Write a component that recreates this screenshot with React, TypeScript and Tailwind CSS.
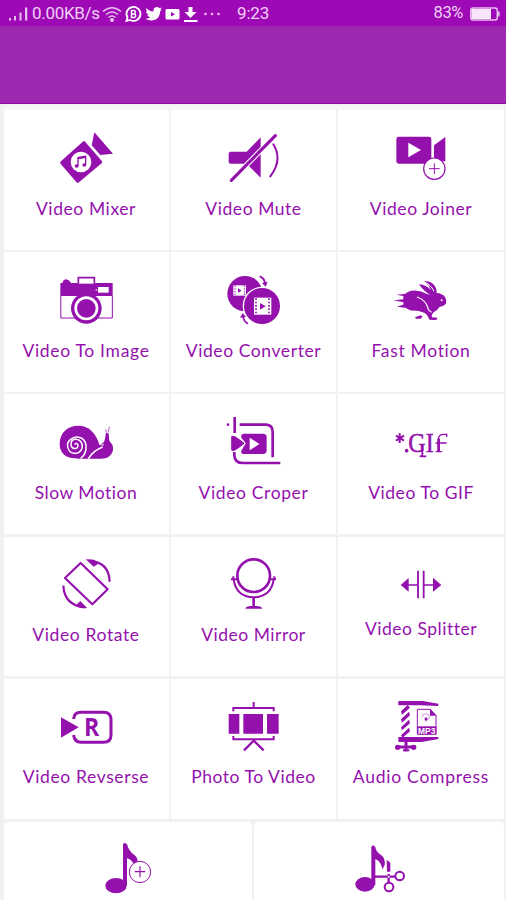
import type { ReactNode } from "react";

const P = "#9411ad";

function Icon({ box, children, w = 56, h = 56 }: { box: string; children: ReactNode; w?: number; h?: number }) {
  return (
    <svg width={w} height={h} viewBox={box} fill={P} className="shrink-0" aria-hidden="true">
      {children}
    </svg>
  );
}

const mixer = (
  <Icon box="174 30 168 168">
    <path d="M252 68 L302 126 L233 184 L185 128 Z" stroke={P} strokeWidth="9" strokeLinejoin="round" />
    <path d="M283 37 L339 101 L301 105 L275 76 Z" />
    <circle cx="243" cy="126" r="31" fill="#fff" />
    <path d="M234 138 V113 L257 109 V134" fill="none" stroke={P} strokeWidth="4" />
    <path d="M234 115 L257 111" stroke={P} strokeWidth="6" />
    <ellipse cx="230" cy="138" rx="6" ry="5" />
    <ellipse cx="253" cy="135" rx="6" ry="5" />
  </Icon>
);

const mute = (
  <Icon box="678 30 168 168">
    <path d="M692 95 H740 L782 52 V173 L740 131 H692 Q686 131 686 125 V101 Q686 95 692 95 Z" />
    <path d="M694 181 L826 47" stroke="#fff" strokeWidth="16" />
    <path d="M694 181 L826 47" stroke={P} strokeWidth="9.500" strokeLinecap="round" />
    <path d="M820 73 Q849 120 811 169" fill="none" stroke={P} strokeWidth="6" strokeLinecap="round" />
  </Icon>
);

const joiner = (
  <Icon box="420 30 168 168">
    <rect x="430" y="50" width="105" height="81" rx="7" />
    <path d="M466 68 L504 90 L466 112 Z" fill="#fff" />
    <path d="M543 76 L577 51 V124 H543 Z" />
    <circle cx="544" cy="146" r="32" fill="#fff" stroke={P} strokeWidth="3.6" />
    <path d="M528 146 H560 M544 130 V162" stroke={P} strokeWidth="3" />
  </Icon>
);

const camera = (
  <Icon box="174 66 168 168">
    <path d="M181 99 H187 Q190 88 199 88 Q209 90 213 99 H338 V138 H181 Z" />
    <path d="M235 101 V83 H283 V101" fill="#fff" stroke={P} strokeWidth="5" />
    <rect x="294" y="111" width="32" height="17" fill="#fff" />
    <circle cx="289" cy="120" r="2.5" fill="#fff" />
    <path d="M182.500 137 V204 H337 V137" fill="none" stroke={P} strokeWidth="3" />
    <circle cx="259" cy="175" r="46" />
    <circle cx="259" cy="175" r="36" fill="#fff" />
    <circle cx="259" cy="175" r="28" />
  </Icon>
);

const converter = (
  <Icon box="678 66 168 168">
    <circle cx="735" cy="131" r="53" />
    <rect x="700" y="106" width="38" height="31" fill="#fff" />
    <path d="M705 107 V136 M733 107 V136" stroke={P} strokeWidth="3" strokeDasharray="4 4" />
    <path d="M714 115 L725 122 L714 128 Z" />
    <circle cx="786" cy="168" r="58" fill="#fff" />
    <circle cx="786" cy="168" r="54" />
    <rect x="762" y="143" width="52" height="51" fill="#fff" />
    <path d="M768 145 V193 M807 145 V193" stroke={P} strokeWidth="5" strokeDasharray="5 5" />
    <path d="M780 159 L797 169 L780 179 Z" />
    <path d="M779 79 Q793 84 795 99" fill="none" stroke={P} strokeWidth="6" />
    <path d="M786 99 L803 95 L797 110 Z" />
    <path d="M744 221 Q731 214 729 199" fill="none" stroke={P} strokeWidth="5" />
    <path d="M720 203 L728 189 L738 201 Z" />
  </Icon>
);

const rabbit = (
  <Icon box="420 66 168 168">
    <path d="M451 139 Q462 120 491 122 Q505 123 516 130 L531 135 Q508 119 498 103 Q520 105 534 120 L526 105 Q518 98 512 94 Q535 91 547 110 Q552 120 551 129 Q568 130 576 141 Q582 150 579 161 Q572 169 560 170 Q554 180 543 186 Q534 194 537 202 L552 203 Q556 208 545 210 L529 209 Q522 190 509 187 Q496 181 478 182 Q456 178 451 162 Z" />
    <path d="M514 96 Q533 103 543 124" stroke="#fff" strokeWidth="3" fill="none" />
    <path d="M492 141 Q520 150 526 178 Q530 184 536 187" stroke="#fff" strokeWidth="3.500" fill="none" />
    <circle cx="566" cy="151" r="3" fill="#fff" />
    <path d="M486 202 L503 196 L509 199 L503 206 H489 Z" />
    <path d="M430 134 L462 131 V140 Z M422 151 L458 147 V158 Z M432 170 L462 160 V174 Z" />
  </Icon>
);

const snail = (
  <Icon box="174 66 168 168">
    <path d="M216 198 C193 195 179 179 179 156 C179 122 203 101 235 101 C268 101 289 125 298 158 Q311 155 314 144 L318 123 L326 124 C328 136 325 145 333 153 C344 165 340 186 325 195 Q318 200 302 200 H239 Z" />
    <path d="M319 121 L317 113 M325 120 L328 105" fill="none" stroke={P} strokeWidth="3" strokeLinecap="round" opacity="0.7" />
    <g fill="none" stroke="#fff" strokeWidth="4.500">
      <path d="M225 158 C225 152 235 154 234 162 C232 174 213 172 213 157 C213 139 234 137 243 150 C254 168 240 186 223 184 C203 182 195 154 212 142 C229 127 254 137 258 159 C260 179 252 192 242 199" />
      <path d="M265 200 Q279 176 308 165" />
      <path d="M298 156 Q304 162 312 158" strokeWidth="3" />
    </g>
  </Icon>
);

const cropper = (
  <Icon box="678 66 168 168">
    <g fill="none" stroke={P} strokeWidth="8">
      <path d="M704 75 V123" />
      <path d="M719 98 H798 Q818 99 818 120 V196" />
      <path d="M703 180 V190 Q704 213 729 213 H841" />
    </g>
    <circle cx="684" cy="98" r="4" />
    <path d="M732 125 H789 Q800 125 800 136 V175 Q800 186 789 186 H732 Q722 186 724 176 L737 154 L724 137 Q722 125 732 125 Z" />
    <path d="M697 135 Q700 131 729 154 Q700 177 697 173 Z" stroke="#fff" strokeWidth="13" strokeLinejoin="round" />
    <path d="M697 135 Q700 131 729 154 Q700 177 697 173 Z" stroke={P} strokeWidth="7" strokeLinejoin="round" />
    <path d="M749 137 L778 156 L749 175 Z" fill="#fff" />
  </Icon>
);

const gif = (
  <Icon box="420 66 168 168">
    <path d="M440 124 V153 M429 131 L453 146 M453 131 L429 146" stroke={P} strokeWidth="6" />
    <circle cx="461" cy="176" r="5.500" />
    <text x="466" y="180" fontFamily="'Liberation Serif', serif" fontSize="80" textLength="76" lengthAdjust="spacingAndGlyphs" stroke={P} strokeWidth="1.500">GI</text>
    <path d="M508 160 V189 Q508 193 500 193 M506 193 H520" fill="none" stroke={P} strokeWidth="5.500" />
    <path d="M556 179 V143 Q556 128 570 127 H581 V135 M548 153 H581 M548 179 H567" fill="none" stroke={P} strokeWidth="4" />
    <path d="M557 179 V140" stroke={P} strokeWidth="8" />
  </Icon>
);

const rotate = (
  <Icon box="174 66 168 168">
    <g fill="none" stroke={P} strokeWidth="6.500">
      <path d="M242 87 L323 166 L277 211 L195 132 Z" strokeLinejoin="round" />
      <path d="M267 80 Q327 84 329 143" />
      <path d="M190 155 Q193 214 254 220" />
    </g>
    <path d="M257 76 L283 77 L295 89 L281 98 Z M262 223 L241 201 L229 212 L240 221 Z" />
  </Icon>
);

const mirror = (
  <Icon box="678 66 168 168">
    <g fill="none" stroke={P}>
      <circle cx="761" cy="125" r="49" strokeWidth="8" />
      <path d="M701 136 Q708 188 761 190 Q814 188 821 136" strokeWidth="6" />
      <path d="M693 136 H715 M807 136 H828 M700 127 V139 M823 127 V139" strokeWidth="6" />
      <path d="M761 189 V218" strokeWidth="8" />
    </g>
    <path d="M736 224 Q738 217 752 216 H770 Q784 217 787 224 Z" />
  </Icon>
);

const splitter = (
  <Icon box="420 66 168 150" h={50}>
    <path d="M443 153 L467 132 V173 Z M565 153 L540 131 V173 Z" />
    <path d="M463 153 H495 M512 153 H544" stroke={P} strokeWidth="5" />
    <path d="M495 110 V193 M512 110 V193" stroke={P} strokeWidth="5.500" />
  </Icon>
);

const reverse = (
  <Icon box="174 66 168 168">
    <path d="M183 124 L236 154 L183 185 Z" />
    <path d="M221 129 Q222 109 243 109 H310 Q333 109 333 131 V177 Q333 199 310 199 H243 Q223 198 221 177" fill="none" stroke={P} strokeWidth="9" />
    <text x="252" y="180" fontFamily="'Open Sans', 'Noto Sans', sans-serif" fontSize="73" fontWeight="700" textLength="46" lengthAdjust="spacingAndGlyphs">R</text>
  </Icon>
);

const board = (
  <Icon box="678 66 168 168">
    <path d="M686 114 H718 V173 H686 Z M730 114 H789 V173 H730 Z M801 114 H836 V173 H801 Z" />
    <g fill="none" stroke={P} strokeWidth="6">
      <path d="M700 106 V96 H821 V106" />
      <path d="M700 180 V190 H821 V180" />
      <path d="M761 78 V96" />
      <path d="M763 192 L732 223 M759 192 L791 223" strokeWidth="7" />
    </g>
  </Icon>
);

const compress = (
  <Icon box="420 66 168 168">
    <path d="M436 75 H510 L556 83 V90 L500 88 H436 Z M436 183 H556 V189 L506 198 H436 Z" />
    <path d="M444 106 L464 87 L471 95 L447 116 Z M444 130 L468 107 L471 118 L447 140 Z M444 154 L468 131 L471 142 L447 163 Z M444 178 L468 155 L471 166 L449 185 Z" />
    <path d="M459 195 V226 M430 213 H488" stroke={P} strokeWidth="9" />
    <path d="M450 223 H469" stroke={P} strokeWidth="6" />
    <circle cx="434" cy="214" r="8" />
    <circle cx="482" cy="214" r="8" />
    <path d="M493 100 H532 L549 118 V174 H493 Z" fill="#fff" stroke={P} strokeWidth="3" />
    <path d="M531 99 V119 H550 Z" />
    <rect x="493" y="151" width="57" height="25" />
    <path d="M508 124 Q508 113 519 113 Q530 114 530 126 L518 133 M519 123 V137" fill="none" stroke={P} strokeWidth="2" opacity="0.7" />
    <circle cx="519" cy="129" r="4.500" />
    <text x="495" y="173" fontFamily="'Liberation Sans', sans-serif" fontSize="26" fontWeight="700" fill="#fff" textLength="52" lengthAdjust="spacingAndGlyphs">MP3</text>
  </Icon>
);

const addMusic = (
  <Icon box="300 492 168 168">
    <ellipse cx="348" cy="629" rx="32" ry="23" />
    <path d="M369 505 Q375 497 382 506 Q384 522 404 538 Q415 547 412 561 L400 562 Q393 550 381 547 V629 H369 Z" />
    <circle cx="420" cy="588" r="32" fill="#fff" stroke={P} strokeWidth="3" />
    <path d="M404 587 H436 M420 571 V604" stroke={P} strokeWidth="3.500" />
  </Icon>
);

const cutMusic = (
  <Icon box="291 492 168 168">
    <ellipse cx="333" cy="625" rx="29" ry="22" />
    <path d="M352 512 Q358 505 364 513 Q365 527 382 538 Q395 548 392 568 L385 580 Q381 556 364 549 V628 H352 Z" />
    <path d="M358 602 H423 M404 594 V619" fill="none" stroke={P} strokeWidth="7" />
    <path d="M398 551 L409 560 V587 H399 Z" />
    <circle cx="437" cy="600" r="13" fill="#fff" stroke={P} strokeWidth="6" />
    <circle cx="405" cy="633" r="13" fill="#fff" stroke={P} strokeWidth="6" />
    <circle cx="404" cy="602" r="3" fill="#fff" />
  </Icon>
);

const rows = [
  {
    cls: "h-[142px] pt-5 border-b-2",
    items: [
      { label: "Video Mixer", icon: mixer, track: "tracking-[0.58px]" },
      { label: "Video Mute", icon: mute, track: "tracking-[0.55px]" },
      { label: "Video Joiner", icon: joiner, track: "tracking-[0.58px]" },
    ],
  },
  {
    cls: "h-[142px] pt-5 border-b-2",
    items: [
      { label: "Video To Image", icon: camera, track: "tracking-[0.68px]" },
      { label: "Video Converter", icon: converter, track: "tracking-[0.58px]" },
      { label: "Fast Motion", icon: rabbit, track: "tracking-[0.68px]" },
    ],
  },
  {
    cls: "h-[143px] pt-5 border-b-3",
    items: [
      { label: "Slow Motion", icon: snail, track: "tracking-[0.5px]" },
      { label: "Video Croper", icon: cropper, track: "tracking-[0.62px]" },
      { label: "Video To GIF", icon: gif, track: "tracking-[0.55px]" },
    ],
  },
  {
    cls: "h-[142px] pt-[19px] border-b-3",
    items: [
      { label: "Video Rotate", icon: rotate, track: "tracking-[0.62px]" },
      { label: "Video Mirror", icon: mirror, track: "tracking-[0.5px]" },
      { label: "Video Splitter", icon: splitter, track: "tracking-[0.5px]" },
    ],
  },
  {
    cls: "h-[143px] pt-[19px] border-b-3",
    items: [
      { label: "Video Revserse", icon: reverse, track: "tracking-[0.62px]" },
      { label: "Photo To Video", icon: board, track: "tracking-[0.52px]" },
      { label: "Audio Compress", icon: compress, track: "tracking-[0.75px]" },
    ],
  },
];

function StatusBar() {
  return (
    <div className="flex h-[26px] shrink-0 items-center bg-[#9d09b5] pl-[9px] pr-[6px] pt-px font-['Roboto',sans-serif] text-[17px] text-[#f1d0f5]">
      <svg width="19" height="14" viewBox="0 0 19 14" fill="#e9bff0" className="shrink-0">
        <rect x="0" y="11" width="2" height="2.500" />
        <rect x="5" y="9" width="2" height="4.500" />
        <rect x="10.500" y="5.500" width="2" height="8" />
        <rect x="16" y="0.500" width="2.300" height="13" />
      </svg>
      <span className="ml-1 w-[69px] whitespace-nowrap tracking-[-0.3px]">0.00KB/s</span>
      <svg width="122" height="18" viewBox="0 0 122 18" className="ml-px shrink-0" fill="none">
        <g stroke="#e9bff0" strokeWidth="1.600">
          <path d="M1 6.500 Q10 -1 19 6.500 M4 9.500 Q10 4.500 16 9.500 M6.500 12.500 Q10 9.500 13.500 12.500" />
          <circle cx="10" cy="15" r="1.200" fill="#fff" />
        </g>
        <path d="M24.500 16 L25.500 12.600 A7 7 0 1 1 28 15 Z" stroke="#fff" strokeWidth="1.800" />
        <path d="M29.500 5.500 H32 A1.800 1.800 0 0 1 32 9 H29.500 Z M29.500 9 H32.300 A1.800 1.800 0 0 1 32.300 12.500 H29.500 Z" stroke="#fff" strokeWidth="1.500" />
        <path d="M44.300 3 Q47 6.400 51.500 6.500 Q51 2.300 54.700 2 Q56.400 1.900 57.500 3.200 L59.500 2.500 L58.300 4.700 L59.800 4.400 L58.200 6.200 Q57.800 15.200 49.500 15.400 Q46 15.400 43.300 13.700 Q46.400 13.700 48 12.200 Q45.700 11.800 45.100 9.800 H46.600 Q44 8.700 43.900 6.300 L45.300 6.600 Q43.400 4.800 44.300 3 Z" fill="#fff" />
        <rect x="63.500" y="4" width="14" height="10.500" rx="1.500" fill="#fff" />
        <path d="M69 7 L73 9.200 L69 11.500 Z" fill="#9d09b5" />
        <path d="M86.500 2 H90.500 V7 H94.500 L88.500 13 L82.500 7 H86.500 Z M82 15 H95.500 V17 H82 Z" fill="#fff" />
        <circle cx="103.500" cy="9" r="1.300" fill="#e9bff0" />
        <circle cx="110" cy="9" r="1.300" fill="#e9bff0" />
        <circle cx="116.500" cy="9" r="1.300" fill="#e9bff0" />
      </svg>
      <span className="ml-[13px] tracking-[-0.15px]">9:23</span>
      <span className="ml-auto text-[16.5px] tracking-[-0.4px]">83%</span>
      <svg width="30" height="14" viewBox="0 0 30 14" className="ml-[7px] shrink-0">
        <rect x="0.800" y="1" width="26.500" height="12" rx="2.500" fill="none" stroke="#e9bff0" strokeWidth="1.500" />
        <rect x="1.500" y="2" width="19.500" height="10" fill="#f9e5fb" />
        <rect x="28" y="4.500" width="1.600" height="5" fill="#e9bff0" />
      </svg>
    </div>
  );
}

export default function App() {
  return (
    <div className="flex h-[900px] w-[506px] flex-col overflow-hidden bg-[#f1f1f2]">
      <StatusBar />
      <header className="h-[78px] shrink-0 border-b border-[#9109a7] bg-[#9c27b0]" />
      <main className="flex flex-col pl-1 pr-[2px]">
        <div className="mt-0.5 h-1 bg-[#f4f7f4]" />
        {rows.map((row, r) => (
          <div key={r} className="grid grid-cols-[167px_167px_166px]">
            {row.items.map((item, c) => (
              <div
                key={item.label}
                className={`flex flex-col items-center border-[#f2f2f4] bg-white ${row.cls} ${c < 2 ? "border-r-2" : ""} ${c === 0 ? "pr-px" : ""}`}
              >
                {item.icon}
                <span
                  className={`mt-[11px] whitespace-nowrap font-['Lato',sans-serif] text-[17.5px] leading-6 text-[#9411ad] ${item.track}`}
                >
                  {item.label}
                </span>
              </div>
            ))}
          </div>
        ))}
        <div className="grid h-[78px] grid-cols-[248px_250px] gap-0.5">
          <div className="flex justify-center rounded-t-sm bg-white pt-[18px]">{addMusic}</div>
          <div className="flex justify-center rounded-t-sm bg-white pt-[18px]">{cutMusic}</div>
        </div>
      </main>
    </div>
  );
}
